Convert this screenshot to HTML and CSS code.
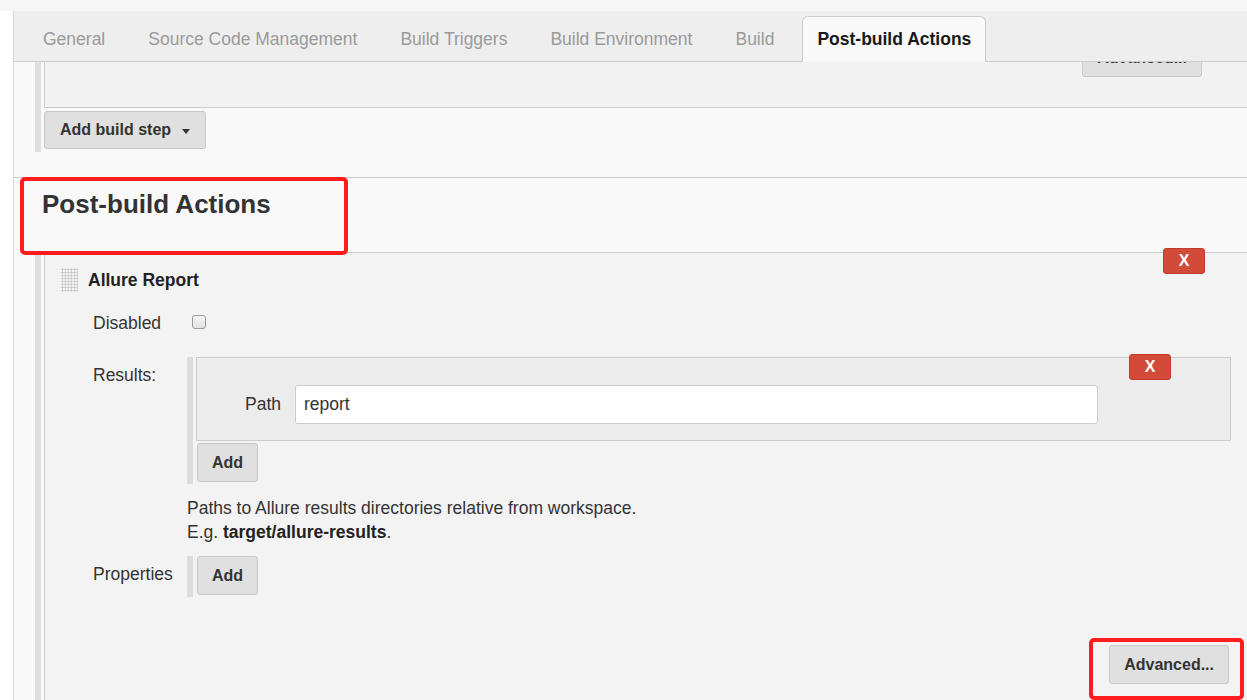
FILE: index.html
```html
<!DOCTYPE html>
<html>
<head>
<meta charset="utf-8">
<title>Post-build Actions</title>
<link rel="stylesheet" href="styles.css">
</head>
<body>
<div class="topband"></div>
<div class="frame">
  <div class="gutter"></div>
  <div class="content">
    <div class="tabbar">
      <div class="tab">General</div>
      <div class="tab">Source Code Management</div>
      <div class="tab">Build Triggers</div>
      <div class="tab">Build Environment</div>
      <div class="tab">Build</div>
      <div class="tab active">Post-build Actions</div>
    </div>

    <div class="build-area">
      <div class="hlist build-list">
        <div class="step-box">
          <button type="button" class="btn">Advanced...</button>
        </div>
        <button type="button" class="btn dropdown">Add build step<span class="caret"></span></button>
      </div>
    </div>

    <div class="section">
      <h2 class="section-title">Post-build Actions</h2>
      <div class="hlist">
        <div class="publisher">
          <button type="button" class="xbtn xbtn-pub">X</button>
          <div class="pub-head"><span class="handle"></span>Allure Report</div>

          <div class="row row-disabled">
            <div class="label">Disabled</div>
            <div class="field"><span class="checkbox"></span></div>
          </div>

          <div class="row row-results">
            <div class="label">Results:</div>
            <div class="field">
              <div class="repeat">
                <div class="repeat-box">
                  <button type="button" class="xbtn xbtn-path">X</button>
                  <div class="path-row">
                    <div class="path-label">Path</div>
                    <div class="input">report</div>
                  </div>
                </div>
                <button type="button" class="btn add">Add</button>
              </div>
            </div>
          </div>

          <div class="help">Paths to Allure results directories relative from workspace.<br>E.g. <b>target/allure-results</b>.</div>

          <div class="row row-props">
            <div class="label">Properties</div>
            <div class="field">
              <div class="repeat">
                <button type="button" class="btn add">Add</button>
              </div>
            </div>
          </div>

          <div class="adv-row">
            <button type="button" class="btn">Advanced...</button>
          </div>
        </div>
      </div>
    </div>
  </div>
</div>

<div class="annot annot-1"></div>
<div class="annot annot-2"></div>
</body>
</html>
```

FILE: styles.css
```css
* { box-sizing: border-box; }

html, body {
  margin: 0;
  overflow: hidden;
}

body {
  position: relative;
  height: 700px;
  font-family: "Liberation Sans", Arial, Helvetica, sans-serif;
  font-size: 17.5px;
  color: #333;
  background: #fff;
}

.topband {
  height: 11px;
  background: #f6f6f6;
}

.frame {
  display: flex;
  height: 689px;
}

.gutter {
  width: 13px;
  flex: none;
  background: #fff;
}

.content {
  flex: 1;
  min-width: 0;
  border-left: 1px solid #d9d9d9;
  background: #f9f9f9;
}

/* tabs */
.tabbar {
  height: 51px;
  display: flex;
  align-items: flex-end;
  padding-left: 14px;
  background: #eee;
  border-bottom: 1px solid #ccc;
}

.tab {
  height: 46px;
  line-height: 44px;
  padding: 0 14px;
  margin-right: 13px;
  margin-bottom: -1px;
  border: 1px solid transparent;
  border-bottom: none;
  color: #9a9a9a;
  white-space: nowrap;
}

.tab.active {
  background: #f9f9f9;
  border-color: #ccc;
  border-radius: 6px 6px 0 0;
  color: #1a1a1a;
  font-weight: bold;
}

/* buttons */
.btn {
  display: inline-flex;
  align-items: center;
  height: 39px;
  padding: 0 14px;
  margin: 0;
  border: 1px solid #c8c8c8;
  border-radius: 3px;
  background: #e0e0e0;
  font-family: "Liberation Sans", Arial, Helvetica, sans-serif;
  font-size: 16px;
  font-weight: bold;
  color: #333;
  white-space: nowrap;
}

.dropdown {
  height: 38px;
  margin-top: 3px;
  padding: 0 15px;
}

.caret {
  width: 0;
  height: 0;
  margin-left: 11px;
  margin-top: 2px;
  border-left: 4px solid transparent;
  border-right: 4px solid transparent;
  border-top: 5px solid #333;
}

.xbtn {
  position: absolute;
  width: 42px;
  height: 26px;
  padding: 0;
  margin: 0;
  display: flex;
  align-items: center;
  justify-content: center;
  background: #d24a38;
  border: 1px solid #c23c2c;
  border-radius: 3px;
  color: #fff;
  font-family: "Liberation Sans", Arial, Helvetica, sans-serif;
  font-size: 16px;
  font-weight: bold;
}

.xbtn-pub { top: -5px; right: 42px; }
.xbtn-path { top: -4px; right: 59px; }

/* build area */
.build-area {
  padding-bottom: 25px;
}

.hlist {
  margin-left: 21px;
  border-left: 6px solid #e0e0e0;
  padding-left: 3px;
}

.build-list {
  padding-bottom: 3px;
}

.step-box {
  height: 46px;
  overflow: hidden;
  display: flex;
  justify-content: flex-end;
  padding-right: 45px;
  background: #f2f2f2;
  border-left: 1px solid #ccc;
  border-bottom: 1px solid #ccc;
}

.step-box .btn {
  margin-top: -24px;
}

/* post-build section */
.section {
  border-top: 1px solid #ccc;
}

.section-title {
  margin: 11px 0 33px 28px;
  font-size: 26px;
  line-height: 30px;
  font-weight: bold;
  color: #333;
}

.publisher {
  position: relative;
  padding: 15px 16px 40px 0;
  background: #f3f3f3;
  border-top: 1px solid #ccc;
  border-left: 1px solid #ccc;
}

.pub-head {
  display: flex;
  align-items: center;
  height: 24px;
  padding-left: 16px;
  font-weight: bold;
  color: #222;
}

.handle {
  width: 17px;
  height: 24px;
  margin-right: 10px;
  background-image: radial-gradient(circle, #c2c2c2 0.9px, transparent 1.2px);
  background-size: 3px 3px;
}

.row {
  display: flex;
  padding-left: 48px;
}

.label {
  width: 94px;
  flex: none;
  padding-top: 6px;
  line-height: 24px;
}

.field {
  flex: 1;
  min-width: 0;
}

.row-disabled { margin-top: 13px; }
.row-results { margin-top: 22px; }
.row-props { margin-top: 12px; }

.checkbox {
  display: block;
  width: 14px;
  height: 14px;
  margin: 10px 0 0 5px;
  border: 1px solid #9a9a9a;
  border-radius: 3px;
  background: linear-gradient(#f4f4f4, #e2e2e2);
}

.repeat {
  border-left: 6px solid #dcdcdc;
  padding-left: 3px;
  padding-bottom: 2px;
}

.repeat-box {
  position: relative;
  padding: 27px 0 16px;
  background: #ececec;
  border: 1px solid #ccc;
}

.path-row {
  display: flex;
  align-items: center;
}

.path-label {
  width: 84px;
  margin-right: 14px;
  text-align: right;
}

.input {
  width: 803px;
  height: 39px;
  padding-left: 8px;
  line-height: 37px;
  background: #fff;
  border: 1px solid #ccc;
  border-radius: 3px;
  color: #333;
}

.add {
  margin-left: 1px;
}

.repeat-box + .add {
  margin-top: 2px;
}

.help {
  margin: 12px 0 0 142px;
  line-height: 24px;
}

.help b {
  color: #222;
}

.adv-row {
  display: flex;
  justify-content: flex-end;
  margin-top: 48px;
  padding-right: 2px;
}

/* red annotation rectangles drawn over the screenshot */
.annot {
  position: absolute;
  border: 4px solid #fe1c1c;
  border-radius: 5px;
  pointer-events: none;
}

.annot-1 {
  left: 20px;
  top: 177px;
  width: 328px;
  height: 78px;
}

.annot-2 {
  left: 1089px;
  top: 638px;
  width: 155px;
  height: 62px;
}
```
